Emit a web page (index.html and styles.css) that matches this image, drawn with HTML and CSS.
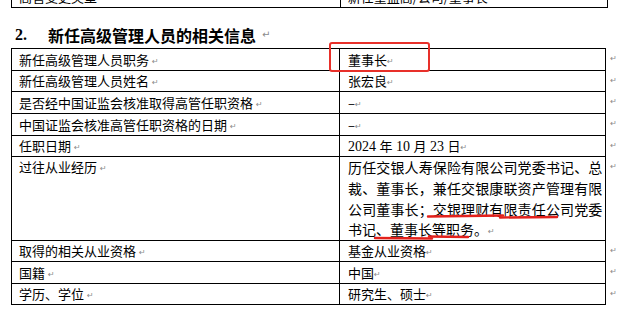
FILE: index.html
```html
<!DOCTYPE html>
<html lang="zh">
<head>
<meta charset="utf-8">
<link rel="stylesheet" href="styles.css">
</head>
<body>
<div class="page">
  <table class="tbl top">
    <tr class="row">
      <td class="c1">高管变更类型</td>
      <td class="c2">新任董监高/公司/董事长</td>
      <td class="out"></td>
    </tr>
  </table>

  <h2 class="heading"><span class="num">2.</span><span class="title">新任高级管理人员的相关信息</span><span class="ret">↵</span></h2>

  <table class="tbl main">
    <tr class="h22">
      <td class="c1">新任高级管理人员职务 <span class="ret">↵</span></td>
      <td class="c2">董事长<span class="ret">↵</span></td>
      <td class="out"><span class="ret">↵</span></td>
    </tr>
    <tr class="h21">
      <td class="c1">新任高级管理人员姓名 <span class="ret">↵</span></td>
      <td class="c2">张宏良<span class="ret">↵</span></td>
      <td class="out"><span class="ret">↵</span></td>
    </tr>
    <tr class="h22">
      <td class="c1">是否经中国证监会核准取得高管任职资格 <span class="ret">↵</span></td>
      <td class="c2">–<span class="ret">↵</span></td>
      <td class="out"><span class="ret">↵</span></td>
    </tr>
    <tr class="h22">
      <td class="c1">中国证监会核准高管任职资格的日期 <span class="ret">↵</span></td>
      <td class="c2">–<span class="ret">↵</span></td>
      <td class="out"><span class="ret">↵</span></td>
    </tr>
    <tr class="h21">
      <td class="c1">任职日期 <span class="ret">↵</span></td>
      <td class="c2 date"><span class="lat">2024 </span>年<span class="lat"> 10 </span>月<span class="lat"> 23 </span>日<span class="ret">↵</span></td>
      <td class="out"><span class="ret">↵</span></td>
    </tr>
    <tr class="tall">
      <td class="c1">过往从业经历 <span class="ret">↵</span></td>
      <td class="c2 exp">历任交银人寿保险有限公司党委书记、总裁、董事长，兼任交银康联资产管理有限公司董事长；交银理财有限责任公司党委书记、董事长等职务。<span class="ret">↵</span></td>
      <td class="out"><span class="ret">↵</span></td>
    </tr>
    <tr class="h21">
      <td class="c1">取得的相关从业资格 <span class="ret">↵</span></td>
      <td class="c2">基金从业资格<span class="ret">↵</span></td>
      <td class="out"><span class="ret">↵</span></td>
    </tr>
    <tr class="h22">
      <td class="c1">国籍 <span class="ret">↵</span></td>
      <td class="c2">中国<span class="ret">↵</span></td>
      <td class="out"><span class="ret">↵</span></td>
    </tr>
    <tr class="h21">
      <td class="c1">学历、学位 <span class="ret">↵</span></td>
      <td class="c2">研究生、硕士<span class="ret">↵</span></td>
      <td class="out"><span class="ret">↵</span></td>
    </tr>
  </table>

  <div class="redbox"></div>
  <svg class="marks" width="618" height="313" viewBox="0 0 618 313">
    <path d="M428 216.5 L503 215.5" />
    <path d="M500 217.5 L557 217" />
    <path d="M375 238 L432 238.5" />
    <path d="M429 236.5 L468 237" />
  </svg>
</div>
</body>
</html>
```

FILE: styles.css
```css
* { box-sizing: border-box; }
html, body {
  margin: 0;
  padding: 0;
  background: #ffffff;
  overflow: hidden;
}
body {
  width: 618px;
  height: 313px;
  font-family: "Noto Sans CJK SC", "Liberation Sans", sans-serif;
  color: #000;
}
.page {
  position: relative;
  display: flow-root;
  width: 618px;
  height: 313px;
  padding-left: 11px;
}
.tbl {
  border-collapse: collapse;
  table-layout: fixed;
  font-size: 13px;
}
.tbl td {
  padding: 0 4px 0 7px;
  vertical-align: middle;
  white-space: nowrap;
  line-height: 16px;
}
.tbl .c1, .tbl .c2 {
  border: 1px solid #000;
}
.top { margin-top: -15px; }
.top .c1 { width: 331px; }
.top .c2 { width: 268px; }
.top .row { height: 22px; }
.main .c1 { width: 329px; }
.main .c2 { width: 268px; padding-left: 8px; }
.tbl .out {
  width: 11px;
  padding: 2px 0 0 4px;
  vertical-align: top;
  line-height: 12px;
}
.main .h22 { height: 22px; }
.main .h21 { height: 21px; }
.main .tall { height: 84px; }
.main .tall .c1 { vertical-align: top; padding-top: 2px; }
.exp {
  white-space: normal !important;
  font-size: 14px;
  line-height: 20.8px !important;
  text-align: justify;
  padding-right: 3px !important;
  vertical-align: top !important;
}
.date .lat {
  font-family: "Liberation Serif", serif;
  font-size: 14px;
  line-height: 12px;
}
.ret {
  font-family: "DejaVu Sans", sans-serif;
  font-size: 8px;
  line-height: 8px;
  color: #8a8a8a;
  font-weight: normal;
  vertical-align: 1px;
}
.heading {
  margin: 0;
  height: 40px;
  padding: 0 0 3px 4px;
  font-size: 16px;
  line-height: 20px;
  font-weight: bold;
  display: flex;
  align-items: flex-end;
}
.heading .num {
  font-family: "Liberation Serif", serif;
  font-size: 16px;
  width: 33px;
  line-height: 20px;
}
.heading .title {
  font-family: "Noto Sans CJK SC", sans-serif;
  line-height: 20px;
}
.heading .ret {
  margin-left: 6px;
  font-size: 10px;
  line-height: 20px;
}
.redbox {
  position: absolute;
  left: 329px;
  top: 42px;
  width: 101px;
  height: 30px;
  border: 2.5px solid #e8302a;
  border-radius: 3px;
}
.marks {
  position: absolute;
  left: 0;
  top: 0;
  pointer-events: none;
}
.marks path {
  fill: none;
  stroke: #e3211c;
  stroke-width: 2.4;
  stroke-linecap: round;
}
```
